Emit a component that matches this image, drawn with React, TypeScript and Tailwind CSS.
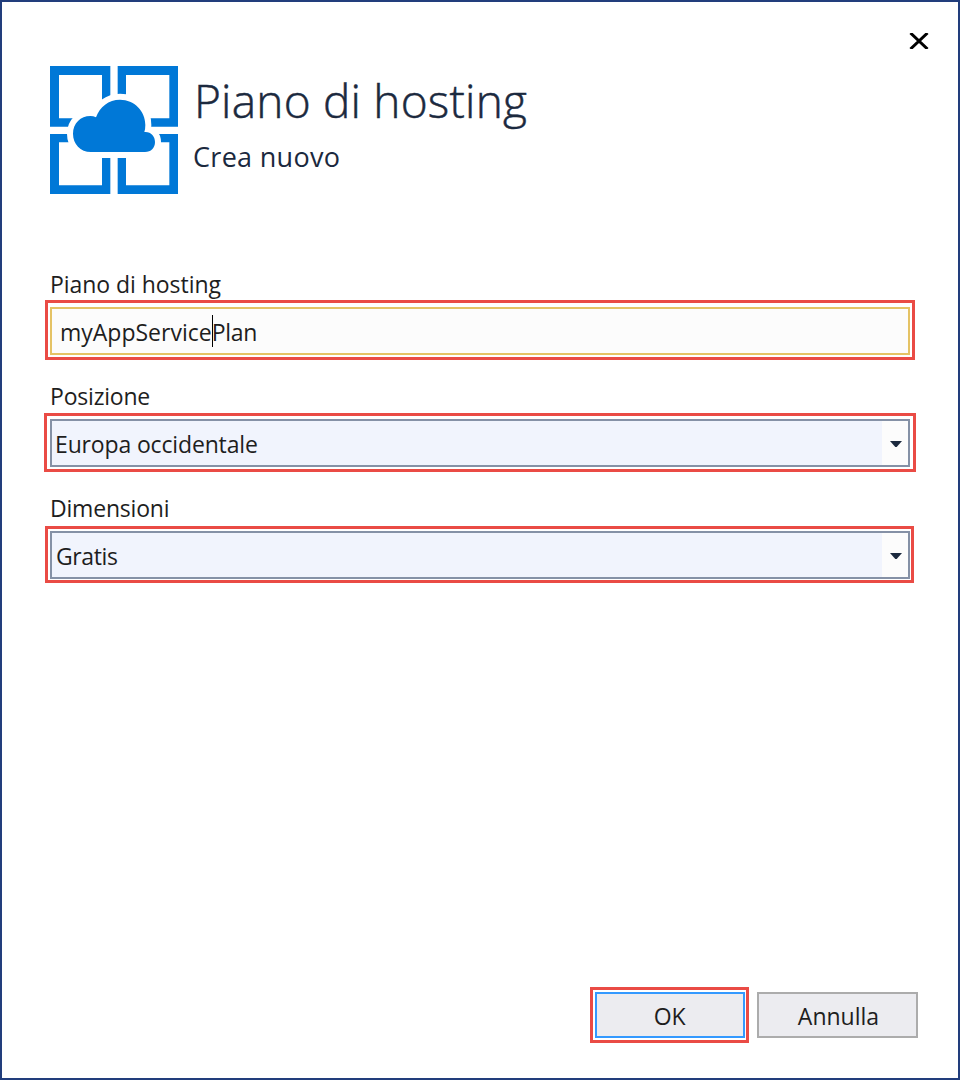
import type { ReactNode } from "react";

function HostingLogo() {
  return (
    <svg className="block h-32 w-32 shrink-0" viewBox="30 30 384 384" aria-hidden="true">
      <path
        fill="#0078d7"
        fillRule="evenodd"
        d="M30 30H211V212H30ZM57 57V187H186V57ZM233 30H414V212H233ZM258 57V187H388V57ZM30 234H211V414H30ZM57 259V388H186V259ZM233 234H414V414H233ZM258 259V388H388V259Z"
      />
      <path
        fill="#0078d7"
        stroke="#ffffff"
        strokeWidth="36"
        strokeLinejoin="round"
        paintOrder="stroke"
        d="M153 288C121 288 99 264 99 233C99 202 122 180 151 180Q160 180 168 184C179 153 206 131 240 131C283 131 316 165 316 207Q316 219 313 228C332 226 345 240 345 258C345 276 333 288 315 288Z"
      />
    </svg>
  );
}

function Label({ children, tracking }: { children: ReactNode; tracking: string }) {
  return <div className={`h-[34px] text-[23px] leading-[30px] ${tracking}`}>{children}</div>;
}

function Select({ value, textClass, ringClass }: { value: string; textClass: string; ringClass: string }) {
  return (
    <div className="relative flex h-12 border-2 border-[#8591a6] bg-[#f1f4fd]">
      <div className={`flex-1 text-[23px] leading-[47px] ${textClass}`}>{value}</div>
      <div className="flex w-[26px] items-center justify-center bg-[#fcfcfc] pt-[2px] pl-[2px]">
        <svg className="h-[6px] w-3" viewBox="0 0 12 6" aria-hidden="true">
          <path d="M0 0H12L6.7 6H5.3Z" fill="#1b293e" />
        </svg>
      </div>
      <div className={`pointer-events-none absolute border-3 border-[#ea4b45] ${ringClass}`} />
    </div>
  );
}

export default function App() {
  return (
    <div className="flex h-[1080px] w-[960px] flex-col border-2 border-[#223d7c] bg-white font-['Open_Sans','Noto_Sans',sans-serif] text-[#1e1e1e]">
      <div className="flex h-16 shrink-0 justify-end pt-[31px] pr-[29px]">
        <button aria-label="Chiudi" className="h-4 w-5">
          <svg className="block h-4 w-5" viewBox="0 0 20 16" aria-hidden="true">
            <path d="M1.5 0L18.5 16M18.5 0L1.5 16" stroke="#000" strokeWidth="3" />
          </svg>
        </button>
      </div>
      <header className="flex h-32 shrink-0 pl-12 text-[#1b293e]">
        <HostingLogo />
        <div className="pl-[16px]">
          <h1 className="h-[72px] text-[46px] leading-[69px] font-light whitespace-nowrap tracking-[0.2px] [-webkit-text-stroke:0.5px_#1b293e]">Piano di hosting</h1>
          <p className="-ml-px text-[27px] leading-[37px] whitespace-nowrap tracking-[0.3px]">Crea nuovo</p>
        </div>
      </header>
      <main className="flex flex-1 flex-col px-12 pt-[75px]">
        <Label tracking="tracking-[-0.05px]">Piano di hosting</Label>
        <div className="relative mt-[4px] flex h-12 border-2 border-[#e5c365] bg-[#fcfcfc] pl-2 text-[23px] leading-[47px]">
          <span className="tracking-[0px]">myAppService</span>
          <span className="relative tracking-[-0.3px]">
            Plan
            <span className="absolute top-[6px] left-0 h-8 w-px bg-black" />
          </span>
          <div className="pointer-events-none absolute -top-[9px] -right-[7px] -bottom-[7px] -left-[7px] border-3 border-[#ea4b45]" />
        </div>
        <div className="mt-[26px]">
          <Label tracking="tracking-[-0.2px]">Posizione</Label>
          <div className="mt-[4px]">
            <Select value="Europa occidentale" textClass="pl-[3px] tracking-[-0.15px]" ringClass="-top-[8px] -right-[8px] -bottom-[7px] -left-[8px]" />
          </div>
        </div>
        <div className="mt-[26px]">
          <Label tracking="tracking-[-0.2px]">Dimensioni</Label>
          <div className="mt-[4px]">
            <Select value="Gratis" textClass="pl-[4px] tracking-[-0.4px]" ringClass="-top-[7px] -right-[6px] -bottom-[6px] -left-[7px]" />
          </div>
        </div>
      </main>
      <footer className="flex shrink-0 justify-end gap-3 pr-10 pb-10 text-[23px]">
        <button className="relative h-[46px] w-[150px] border-2 border-[#3399ff] bg-[#ececf0] pr-px leading-[45px] tracking-[-0.2px]">
          OK
          <span className="pointer-events-none absolute -top-[7px] -right-[6px] -bottom-[7px] -left-[7px] border-3 border-[#ea4b45]" />
        </button>
        <button className="h-[46px] w-[161px] border-2 border-[#acacac] bg-[#ececf0] pl-[2px] leading-[45px]">Annulla</button>
      </footer>
    </div>
  );
}
